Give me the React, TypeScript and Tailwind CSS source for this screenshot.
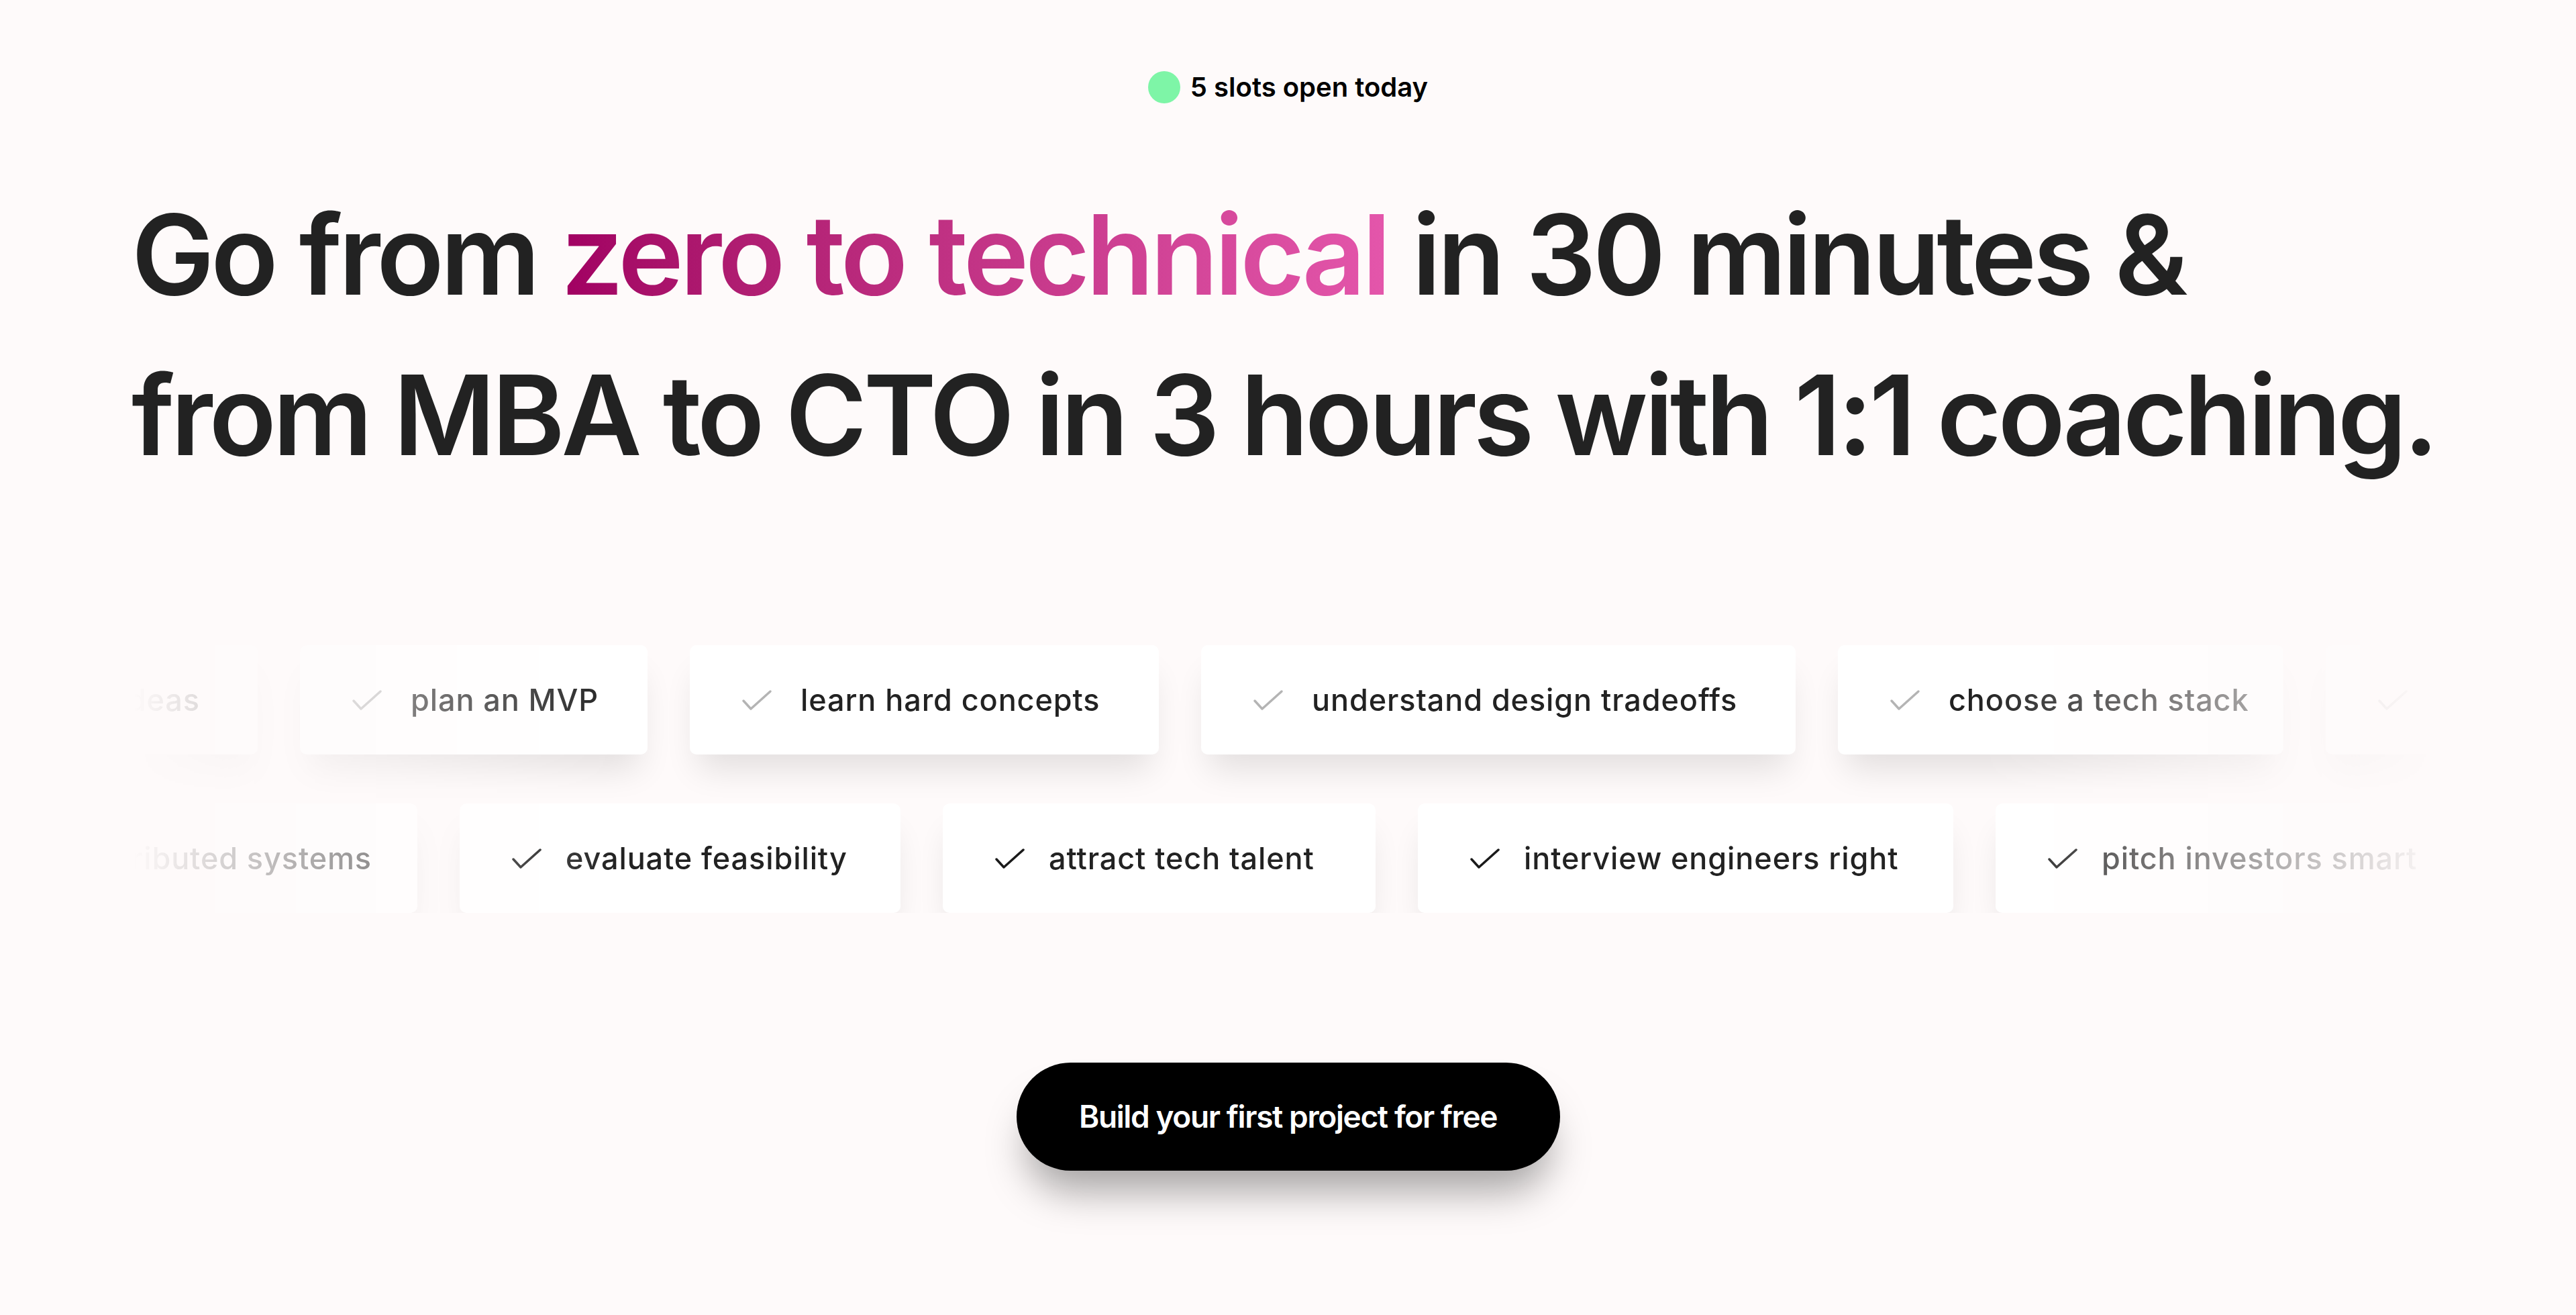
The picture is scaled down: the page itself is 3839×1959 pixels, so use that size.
const rowOne = [
  { label: "validate ideas", w: "w-[560px]" },
  { label: "plan an MVP", w: "w-[518px]" },
  { label: "learn hard concepts", w: "w-[699px]" },
  { label: "understand design tradeoffs", w: "w-[886px]" },
  { label: "choose a tech stack", w: "w-[664px]" },
  { label: "hire your first engineer", w: "w-[780px]" },
];

const rowTwo = [
  { label: "distributed systems", w: "w-[667px]" },
  { label: "evaluate feasibility", w: "w-[657px]" },
  { label: "attract tech talent", w: "w-[645px]" },
  { label: "interview engineers right", w: "w-[798px]" },
  { label: "pitch investors smart", w: "w-[720px]" },
  { label: "ship faster", w: "w-[500px]" },
];

const Check = ({ light }: { light?: boolean }) => (
  <svg width="46" height="32" viewBox="0 0 46 32" fill="none" className="shrink-0">
    <polyline
      points="3,17 14,29 43,3"
      stroke={light ? "#b4b4b4" : "#1a1a1a"}
      strokeWidth="3.5"
      strokeLinecap="round"
      strokeLinejoin="round"
    />
  </svg>
);

const Card = ({ label, w, light }: { label: string; w: string; light?: boolean }) => (
  <div
    className={`${w} shrink-0 h-[163px] flex items-center pl-[77px] rounded-[10px] bg-white shadow-[0_34px_50px_-12px_rgba(0,0,0,0.11)]`}
  >
    <Check light={light} />
    <span
      className={`${light ? "ml-[42px]" : "ml-[35px]"} whitespace-nowrap text-[45px] font-medium tracking-[0.02em] text-[#222]`}
    >
      {label}
    </span>
  </div>
);

export default function App() {
  return (
    <div className="min-h-screen w-full overflow-hidden bg-[#fefafa] font-['Inter',sans-serif]">
      <div className="flex items-center justify-center gap-[15px] pt-[100px]">
        <span className="w-12 h-12 rounded-full bg-[#7ef5a7]" />
        <span className="text-[40px] font-semibold text-black">5 slots open today</span>
      </div>

      <h1 className="mt-[100px] pl-[196px] text-[165px] leading-[239px] font-semibold tracking-[-0.032em] text-[#222] whitespace-nowrap">
        Go from{" "}
        <span className="bg-linear-to-r from-[#a10062] to-[#e456ab] bg-clip-text text-transparent">
          zero to technical
        </span>{" "}
        in 30 minutes &amp;
        <br />
        from MBA to CTO in 3 hours with 1:1 coaching.
      </h1>

      <div className="mt-[223px] flex flex-col gap-[73px] [mask-image:linear-gradient(to_right,transparent_200px,black_920px,black_2950px,transparent_3630px)]">
        <div className="flex gap-[63px] -ml-[176px]">
          {rowOne.map((c) => (
            <Card key={c.label} label={c.label} w={c.w} light />
          ))}
        </div>
        <div className="flex gap-[63px] -ml-[45px]">
          {rowTwo.map((c) => (
            <Card key={c.label} label={c.label} w={c.w} />
          ))}
        </div>
      </div>

      <div className="flex justify-center mt-[223px]">
        <button className="w-[810px] h-[161px] rounded-full bg-black text-white text-[46px] font-semibold tracking-[-0.03em] shadow-[0_45px_60px_-15px_rgba(0,0,0,0.35)]">
          Build your first project for free
        </button>
      </div>
    </div>
  );
}
